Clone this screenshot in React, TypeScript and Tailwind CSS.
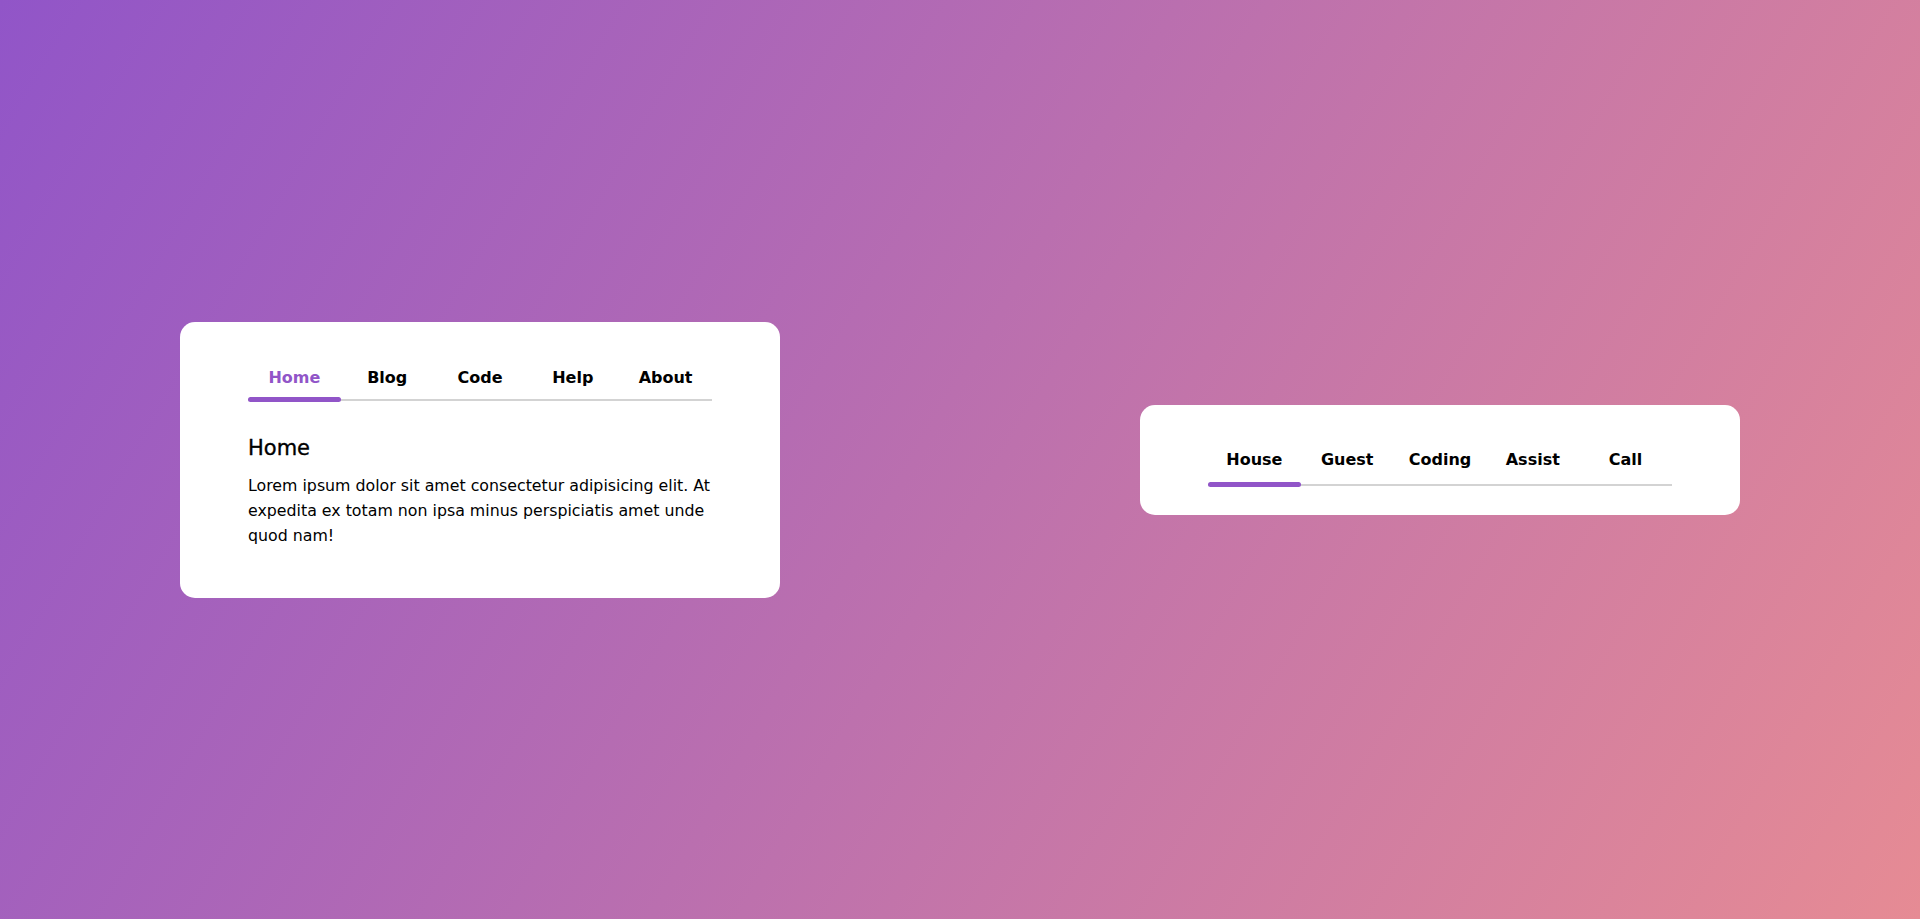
import React, { useState } from "react";

const font = { fontFamily: '"DejaVu Sans", "Noto Sans", sans-serif' };

function Tabs({
  items,
  padTop,
  padBottom,
  colorActive,
}: {
  items: string[];
  padTop: string;
  padBottom: string;
  colorActive: boolean;
}) {
  const [active, setActive] = useState(0);
  return (
    <div className="relative flex border-b-2 border-[#d3d3d3]">
      {items.map((t, i) => (
        <button
          key={t}
          onClick={() => setActive(i)}
          className={`flex-1 text-center text-[16px] leading-[24px] font-bold ${padTop} ${padBottom} ${
            colorActive && i === active ? "text-[#9155c8]" : "text-black"
          }`}
        >
          {t}
        </button>
      ))}
      <span
        className="absolute bottom-[-3px] h-[5px] w-1/5 rounded-full bg-[#9155c8]"
        style={{ left: `${active * 20}%` }}
      />
    </div>
  );
}

export default function App() {
  return (
    <div
      style={font}
      className="flex h-[919px] w-full items-center justify-around bg-[linear-gradient(120deg,#9155c8,#e68b94)]"
    >
      <div className="w-[600px] rounded-[15px] bg-white px-[68px] pb-[50px]">
        <Tabs
          items={["Home", "Blog", "Code", "Help", "About"]}
          padTop="pt-[44px]"
          padBottom="pb-[9px]"
          colorActive={true}
        />
        <h2 className="mt-[33px] text-[21px] leading-[28px] font-normal text-black [-webkit-text-stroke:0.35px_black]">
          Home
        </h2>
        <p className="mt-[11px] text-[15.8px] leading-[25px] text-black">
          Lorem ipsum dolor sit amet consectetur adipisicing elit. At expedita
          ex totam non ipsa minus perspiciatis amet unde quod nam!
        </p>
      </div>
      <div className="w-[600px] rounded-[15px] bg-white px-[68px] pb-[29px]">
        <Tabs
          items={["House", "Guest", "Coding", "Assist", "Call"]}
          padTop="pt-[43px]"
          padBottom="pb-[12px]"
          colorActive={false}
        />
      </div>
    </div>
  );
}
